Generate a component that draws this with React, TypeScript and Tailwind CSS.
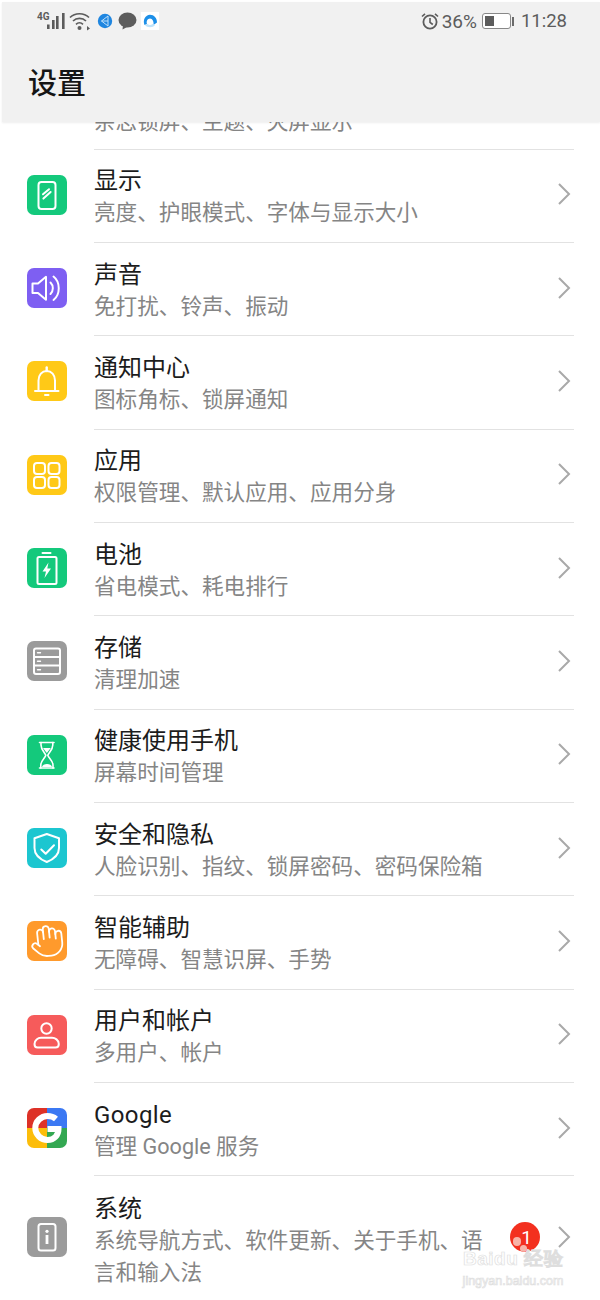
import React from "react";
import { Hand } from "lucide-react";

const S = { fill: "none", stroke: "#fff", strokeWidth: 2, strokeLinecap: "round" as const, strokeLinejoin: "round" as const };

function Box({ color, children }: { color: string; children: React.ReactNode }) {
  return (
    <div className={`w-10 h-10 rounded-[7px] shrink-0 flex items-center justify-center overflow-hidden ${color}`}>
      {children}
    </div>
  );
}

function V({ children }: { children: React.ReactNode }) {
  return <svg width="40" height="40" viewBox="0 0 40 40">{children}</svg>;
}

const icons: Record<string, React.ReactNode> = {
  display: (
    <Box color="bg-[#14c97c]"><V><g {...S}>
      <rect x="11.5" y="7" width="17" height="27" rx="3" />
      <path d="M16 19.3 22 14.2M16.4 23.6 23.6 17" strokeWidth="2" />
    </g></V></Box>
  ),
  sound: (
    <Box color="bg-[#7e5ff2]"><V><g {...S}>
      <path d="M5.5 15.5H11L19 8.8V31.8L11 25H5.5Z" />
      <path d="M23.5 14.5C26.6 17.6 26.6 23 23.5 26M26.5 8.5C33.5 14 33.5 26.5 26.5 32" />
    </g></V></Box>
  ),
  bell: (
    <Box color="bg-[#ffc917]"><V><g {...S}>
      <path d="M8 30H31.5M11.5 30V19.5C11.5 14 15 10 19.7 10C24.5 10 28 14 28 19.5V30" />
      <path d="M19.7 6.5V10" strokeWidth="2.4" />
      <path d="M18 34H21.5" strokeWidth="2" />
    </g></V></Box>
  ),
  apps: (
    <Box color="bg-[#ffc917]"><V><g {...S}>
      <rect x="7" y="8" width="11" height="11" rx="3" />
      <rect x="21.5" y="8" width="11" height="11" rx="3" />
      <rect x="7" y="22" width="11" height="11" rx="3" />
      <rect x="21.5" y="22" width="11" height="11" rx="3" />
    </g></V></Box>
  ),
  battery: (
    <Box color="bg-[#14c97c]"><V>
      <g {...S}><rect x="10.5" y="9" width="19" height="27" rx="1.5" /><path d="M15.5 5H23.5" strokeWidth="2" /></g>
      <path d="M21.5 14.5 15.5 23.5H19L17.5 30 24 20.5H20.3Z" fill="#fff" />
    </V></Box>
  ),
  storage: (
    <Box color="bg-[#9b9b9b]"><V>
      <g {...S}>
        <rect x="7" y="7.5" width="26" height="25.5" rx="2" />
        <path d="M7 16H33M7 24.5H33" />
        <path d="M10.5 11.8H13.5M10.5 20.2H13.5M10.5 28.8H13.5" strokeWidth="1.4" />
      </g>
    </V></Box>
  ),
  hourglass: (
    <Box color="bg-[#14c97c]"><V>
      <g {...S} strokeWidth="1.6">
        <path d="M12.5 7.5H27M12.5 33H27" />
        <path d="M14 7.5V10C14 15 18 17.5 18.8 20.3C18 23 14 25.5 13.8 30V33" />
        <path d="M25.8 7.5V10C25.8 15 21.6 17.5 20.8 20.3C21.6 23 25.8 25.5 26 30V33" />
      </g>
      <path d="M16 13H23.8L19.8 18Z" fill="#fff" />
      <path d="M15 32C15.5 28 24.5 28 25 32Z" fill="#fff" />
    </V></Box>
  ),
  shield: (
    <Box color="bg-[#1cc6d0]"><V><g {...S}>
      <path d="M19.8 6 32 10.3V20C32 27 26 31.5 19.8 34C13.5 31.5 7.5 27 7.5 20V10.3Z" />
      <path d="M14.3 21.5 18.7 25.8 27 17.3" strokeWidth="2" />
    </g></V></Box>
  ),
  hand: (
    <Box color="bg-[#ff9a2c]">
      <Hand size={36} color="#fff" strokeWidth={1.2} className="-rotate-6" />
    </Box>
  ),
  user: (
    <Box color="bg-[#f65b5b]"><V><g {...S}>
      <circle cx="19.5" cy="13.5" r="5.2" />
      <path d="M7.5 29C7.5 25 11 22.8 14 22.8H25C28 22.8 31.8 25 31.8 29C31.8 31.5 30.8 32.5 28.5 32.5H10.5C8.5 32.5 7.5 31.5 7.5 29Z" />
    </g></V></Box>
  ),
  google: (
    <Box color="bg-white"><V>
      <rect x="0" y="0" width="20" height="20" fill="#dd3127" />
      <rect x="20" y="0" width="20" height="20" fill="#3b78f3" />
      <rect x="0" y="20" width="20" height="20" fill="#fcbd0a" />
      <rect x="20" y="20" width="20" height="20" fill="#33a852" />
      <path d="M29 11C26.7 9 23.6 8 20.5 8C14 8 8.3 13.4 8.3 20C8.3 26.6 14 32 20.5 32C27.5 32 31.5 27 31.5 21H20.5" fill="none" stroke="#fff" strokeWidth="6" />
    </V></Box>
  ),
  system: (
    <Box color="bg-[#9b9b9b]"><V>
      <rect x="11.5" y="7" width="17" height="26.5" rx="2.5" {...S} />
      <circle cx="20" cy="14.3" r="1.6" fill="#fff" />
      <rect x="18.6" y="18" width="2.8" height="9" fill="#fff" />
    </V></Box>
  ),
};

function Chevron() {
  return (
    <svg width="14" height="24" viewBox="0 0 14 24" className="shrink-0">
      <path d="M2 2 12 12 2 22" fill="none" stroke="#a9a9a9" strokeWidth="2" />
    </svg>
  );
}

const rows: [string, string, string][] = [
  ["display", "显示", "亮度、护眼模式、字体与显示大小"],
  ["sound", "声音", "免打扰、铃声、振动"],
  ["bell", "通知中心", "图标角标、锁屏通知"],
  ["apps", "应用", "权限管理、默认应用、应用分身"],
  ["battery", "电池", "省电模式、耗电排行"],
  ["storage", "存储", "清理加速"],
  ["hourglass", "健康使用手机", "屏幕时间管理"],
  ["shield", "安全和隐私", "人脸识别、指纹、锁屏密码、密码保险箱"],
  ["hand", "智能辅助", "无障碍、智慧识屏、手势"],
  ["user", "用户和帐户", "多用户、帐户"],
  ["google", "Google", "管理 Google 服务"],
];

function Row({ icon, title, sub }: { icon: string; title: string; sub: string }) {
  return (
    <div className="h-[93.33px] flex items-center pl-[27px] pr-[26px]">
      <div className="mt-[-3px]">{icons[icon]}</div>
      <div className="ml-[27px] flex-1 h-full flex items-center justify-between border-b border-[#e2e2e2]">
        <div className="flex flex-col mt-[3px]">
          <div className={`text-[24px] leading-[32px] text-[#1c1c1c] ${title === "Google" ? "tracking-[0.4px]" : ""}`}>{title}</div>
          <div className="text-[21.6px] leading-[32px] text-[#858585]">{sub}</div>
        </div>
        <div className="mr-[3px] mb-[3px]"><Chevron /></div>
      </div>
    </div>
  );
}

export default function App() {
  return (
    <div className="relative w-[600px] h-[1300px] overflow-hidden bg-white font-['Roboto','Noto_Sans_CJK_SC',sans-serif]">
      <header className="relative z-10 ml-[2px] mt-[2px] h-[120px] bg-[#f1f1f1] shadow-[0_1px_2px_rgba(0,0,0,0.07)]">
        <div className="h-[38px] flex items-center justify-between pl-[34px] pr-[33px] text-[#5c5c5c]">
          <div className="flex items-center">
            <svg width="30" height="20" viewBox="0 0 30 20" className="mr-[3px]">
              <text x="1" y="8.5" fontSize="10" fontWeight="700" fill="#5c5c5c" fontFamily="Roboto">4G</text>
              <rect x="11" y="13.5" width="2.6" height="4.5" fill="#5c5c5c" />
              <rect x="16" y="9" width="2.6" height="9" fill="#5c5c5c" />
              <rect x="20" y="5" width="2.6" height="13" fill="#5c5c5c" />
              <rect x="26" y="2" width="2.6" height="16" fill="#5c5c5c" />
            </svg>
            <svg width="22" height="20" viewBox="0 0 22 20" className="mr-[6px]">
              <g fill="none" stroke="#5c5c5c" strokeWidth="1.7">
                <path d="M1 6.5C6 1.5 15 1.5 20 6.5" />
                <path d="M4 10C7.5 6.5 13.5 6.5 17 10" />
                <path d="M7 13.3C9 11.5 12 11.5 14 13.3" />
              </g>
              <circle cx="10.5" cy="17" r="2" fill="#5c5c5c" />
              <path d="M18 15 21 17.5 18 19.5Z" fill="#5c5c5c" />
            </svg>
            <svg width="16" height="16" viewBox="0 0 16 16" className="mr-[5px]">
              <circle cx="8" cy="8" r="7.2" fill="#1f86e0" />
              <path d="M11 3 4.5 8 11 13M11 3V13M4.5 8H11" fill="none" stroke="#bfe0fa" strokeWidth="1" />
            </svg>
            <svg width="19" height="18" viewBox="0 0 19 18" className="mr-[4px]">
              <ellipse cx="9.5" cy="8" rx="9" ry="7.6" fill="#5c5c5c" />
              <path d="M5 13 4.5 17.5 10 14.5Z" fill="#5c5c5c" />
            </svg>
            <div className="w-[18px] h-[18px] bg-white flex items-center justify-center">
              <svg width="16" height="16" viewBox="0 0 16 16">
                <path d="M2.5 12C0.5 7 3.5 1.8 8 1.8C12 1.8 15 5 15 9.5L11.5 12C12 8.5 10.5 5.5 8 5.5C5.5 5.5 4 8.5 5 11Z" fill="#1c8fe8" />
                <path d="M3 12C5 15 11 15 13 12L10.5 11C9 12.3 7 12.3 5.5 11Z" fill="#bfe3fa" />
              </svg>
            </div>
          </div>
          <div className="flex items-center">
            <svg width="18" height="18" viewBox="0 0 18 18" className="mr-[3px]">
              <circle cx="9" cy="10" r="6.6" fill="none" stroke="#5c5c5c" strokeWidth="1.8" />
              <path d="M9 6V10.3L11.8 12.5" fill="none" stroke="#5c5c5c" strokeWidth="1.6" />
              <path d="M1 4.5 4 1.8M17 4.5 14 1.8" stroke="#5c5c5c" strokeWidth="1.6" />
            </svg>
            <span className="text-[19px] leading-none mr-[5px]">36%</span>
            <div className="flex items-center mr-[7px]">
              <div className="w-[29px] h-[16px] rounded-[3px] border border-[#888] bg-white p-[2px]">
                <div className="w-[9px] h-full bg-[#5c5c5c]" />
              </div>
              <div className="w-[2px] h-[9px] ml-[1px] bg-[#6a6a6a]" />
            </div>
            <span className="text-[18.5px] leading-none">11:28</span>
          </div>
        </div>
        <div className="pl-[26px] pt-[21px] text-[29px] leading-[40px] font-medium text-[#151515] font-['Noto_Sans_CJK_SC',sans-serif]">设置</div>
      </header>

      <main>
        <div className="h-[27.67px] overflow-hidden pr-[26px] pl-[94px]">
          <div className="h-full border-b border-[#e2e2e2] flex items-end pb-[11px]">
            <div className="text-[21.6px] leading-[32px] text-[#858585] whitespace-nowrap">杂志锁屏、主题、灭屏显示</div>
          </div>
        </div>
        {rows.map(([icon, title, sub]) => (
          <Row key={title} icon={icon} title={title} sub={sub} />
        ))}
        <div className="flex items-center pl-[27px] pr-[29px] h-[122px]">
          {icons.system}
          <div className="ml-[27px] flex-1 flex items-center justify-between">
            <div className="w-[392px] mt-[7px]">
              <div className="text-[24px] leading-[32px] text-[#1c1c1c]">系统</div>
              <div className="text-[21.6px] leading-[32px] text-[#858585]">系统导航方式、软件更新、关于手机、语言和输入法</div>
            </div>
            <Chevron />
          </div>
        </div>
      </main>

      <div className="absolute left-[510px] top-[1222px] w-[30px] h-[30px] rounded-full bg-[#f3301f] flex items-center justify-center text-white text-[19px] leading-none overflow-hidden">
        <span className="ml-[3px]">1</span>
        <span className="absolute left-[3px] top-[15px] w-[8px] h-[9px] rounded-full bg-[#f7b3a8]" />
        <span className="absolute left-[10px] top-[23px] w-[7px] h-[7px] rounded-full bg-[#f7b3a8]" />
      </div>
      <div className="absolute left-[458px] top-[1248px] w-[110px] text-center text-white font-['Liberation_Sans',sans-serif] [-webkit-text-stroke:0.7px_#dedede]">
        <div className="text-[19px] leading-[22px] font-bold tracking-[0.5px] whitespace-nowrap">Baidu 经验</div>
        <div className="text-[12.5px] leading-[16px] mt-[3px] whitespace-nowrap">jingyan.baidu.com</div>
      </div>
    </div>
  );
}
